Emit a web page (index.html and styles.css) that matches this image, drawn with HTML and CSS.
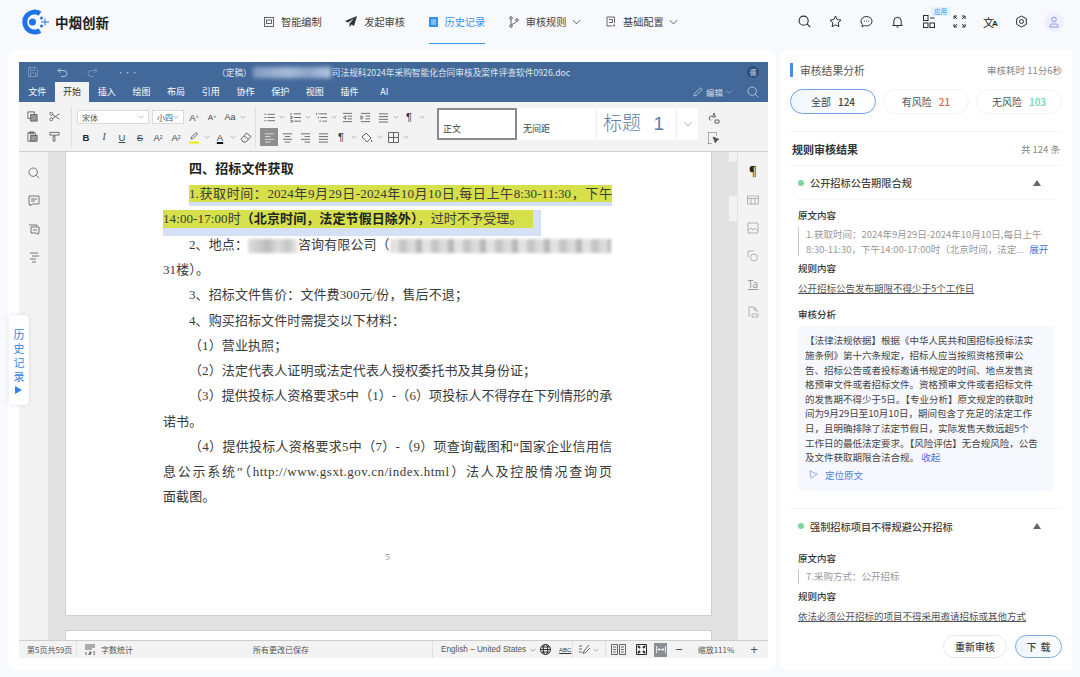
FILE: index.html
```html
<!DOCTYPE html>
<html lang="zh-CN">
<head>
  <meta charset="UTF-8" />
  <meta name="viewport" content="width=device-width, initial-scale=1.0">
  <title>中烟创新</title>
  <link rel="stylesheet" href="styles.css">
</head>
<body>

<!-- Shared icons -->
<svg class="icon-defs" xmlns="http://www.w3.org/2000/svg">
  <symbol id="i-list" viewBox="0 0 12 12"><path d="M4 2.5h8M4 6h8M4 9.5h8M0.5 2.5h2M0.5 6h2M0.5 9.5h2"/></symbol>
  <symbol id="i-list2" viewBox="0 0 12 12"><path d="M4 2h8M4 6h8M4 10h8M1 1v2.5M.5 5h2l-2 2h2M.5 9h2v2h-2"/></symbol>
  <symbol id="i-list3" viewBox="0 0 12 12"><path d="M3 2h9M5 6h7M7 10h5M.5 1v2M2.5 5v2M4.5 9v2"/></symbol>
  <symbol id="i-in" viewBox="0 0 12 12"><path d="M1 1.5h10M6 4.5h5M6 7.5h5M1 10.5h10M1 4l2.5 2L1 8z"/></symbol>
  <symbol id="i-out" viewBox="0 0 12 12"><path d="M1 1.5h10M6 4.5h5M6 7.5h5M1 10.5h10M4 4L1.5 6 4 8z"/></symbol>
  <symbol id="i-left" viewBox="0 0 12 12"><path d="M1 2h10M1 5h6M1 8h10M1 11h6"/></symbol>
  <symbol id="i-center" viewBox="0 0 12 12"><path d="M1 2h10M3 5h6M1 8h10M3 11h6"/></symbol>
  <symbol id="i-right" viewBox="0 0 12 12"><path d="M1 2h10M5 5h6M1 8h10M5 11h6"/></symbol>
  <symbol id="i-just" viewBox="0 0 12 12"><path d="M1 2h10M1 5h10M1 8h10M1 11h10"/></symbol>
  <symbol id="i-copy" viewBox="0 0 12 12"><rect x="1" y="1" width="7" height="7"/><rect x="4" y="4" width="7" height="7" fill="#9a9a9a"/></symbol>
  <symbol id="i-paste" viewBox="0 0 12 12"><rect x="1" y="2" width="8" height="9"/><rect x="3" y="1" width="4" height="2"/><rect x="4" y="5" width="7" height="6" fill="#9a9a9a"/></symbol>
  <symbol id="i-cut" viewBox="0 0 12 12"><circle cx="2.5" cy="3" r="1.6"/><circle cx="2.5" cy="9" r="1.6"/><path d="M4 4l7.5 5M4 8l7.5-5"/></symbol>
  <symbol id="i-brush" viewBox="0 0 12 12"><path d="M1 1.5h10v3H1zM6 4.5v1.500H4.500v5h2V6"/></symbol>
  <symbol id="i-search" viewBox="0 0 12 12"><circle cx="5.200" cy="5.200" r="4.200"/><path d="M8.300 8.300L11.300 11.300"/></symbol>
  <symbol id="i-chev" viewBox="0 0 12 8"><path d="M1 1.500l5 5 5-5"/></symbol>
</svg>

<!-- Top navigation -->
<header class="topbar">
  <div class="logo">
    <svg width="30" height="26" viewBox="0 0 30 26">
      <path d="M20 4.500A10 10 0 1 0 20 21.500" fill="none" stroke="#1f72e8" stroke-width="5"/>
      <circle cx="12.500" cy="13" r="3.500" fill="#1f72e8"/>
      <path d="M21 13h8M25 9.500v7" stroke="#1f72e8" stroke-width="1" fill="none"/>
      <circle cx="21.500" cy="9" r="1.500" fill="#1f72e8"/><circle cx="21.500" cy="17" r="1.500" fill="#1f72e8"/>
    </svg>
    <span class="logo-text">中烟创新</span>
  </div>
  <nav class="nav">
    <a class="nav-item">
      <svg width="10" height="10" viewBox="0 0 10 10" class="ln"><rect x=".5" y=".5" width="9" height="9"/><rect x="2.500" y="3" width="5" height="3.500"/></svg>智能编制
    </a>
    <a class="nav-item">
      <svg width="12" height="11" viewBox="0 0 12 11"><path d="M12 0L0 5l3 1.500L9 2.500 4.500 7.500V11l2-2.500 2.500 1.500z" fill="#333"/></svg>发起审核
    </a>
    <a class="nav-item active">
      <svg width="9" height="10" viewBox="0 0 9 10"><rect width="9" height="10" rx="1" fill="#2f8fef"/><path d="M2 3h5M2 5h5M2 7h5" stroke="#fff" stroke-width=".8"/></svg>历史记录
    </a>
    <a class="nav-item">
      <svg width="10" height="12" viewBox="0 0 10 12" class="ln"><circle cx="2" cy="2" r="1.300"/><circle cx="2" cy="10" r="1.300"/><circle cx="8" cy="4" r="1.300"/><path d="M2 3.300v5.400M7.500 5.300C7 7.500 4 7 2.800 8.800"/></svg>审核规则<svg class="chev" width="9" height="6"><use href="#i-chev"/></svg>
    </a>
    <a class="nav-item">
      <svg width="10" height="11" viewBox="0 0 10 11" class="ln"><path d="M8.500 7V1H1v9h5M3 3.500h3.500v3H3M8 8.500v2M7 9.500h2"/></svg>基础配置<svg class="chev" width="9" height="6"><use href="#i-chev"/></svg>
    </a>
  </nav>
  <div class="tools">
    <span class="tool-btn"><svg width="13" height="13" class="ln-dark"><use href="#i-search"/></svg></span>
    <span class="tool-btn"><svg width="13" height="13" viewBox="0 0 13 13" class="ln-dark"><path d="M6.500 1l1.700 3.600 3.800.5-2.800 2.700.7 3.900-3.400-1.900-3.400 1.900.7-3.900L1 5.100l3.800-.5z"/></svg></span>
    <span class="tool-btn"><svg width="13" height="13" viewBox="0 0 13 13" class="ln-dark"><path d="M6.500 1.500c3 0 5.500 2 5.500 4.700s-2.500 4.700-5.500 4.700c-.8 0-1.500-.1-2.200-.4L2 11.800l.4-2.400C1.500 8.500 1 7.400 1 6.200 1 3.500 3.500 1.500 6.500 1.500z"/><path d="M4 6.200h.8M6.100 6.200h.8M8.200 6.200H9"/></svg></span>
    <span class="tool-btn"><svg width="13" height="13" viewBox="0 0 13 13" class="ln-dark"><path d="M1.500 10.500h10M2.800 10.500V6a3.700 3.700 0 0 1 7.400 0v4.500M5.500 12h2"/></svg></span>
    <span class="tool-btn apps">
      <svg width="12" height="13" viewBox="0 0 12 13" class="ln-dark"><rect x=".5" y=".5" width="4.500" height="5"/><rect x=".5" y="8" width="4.500" height="4.500"/><rect x="7" y="8" width="4.500" height="4.500"/><path d="M7 3h4.500"/></svg>
      <span class="badge">应用</span>
    </span>
    <span class="tool-btn"><svg width="13" height="13" viewBox="0 0 13 13" class="ln-dark"><path d="M1 4V1h3M1 1l3 3M12 4V1H9M12 1L9 4M1 9v3h3M1 12l3-3M12 9v3H9M12 12L9 9"/></svg></span>
    <span class="tool-btn trans">文<b>A</b></span>
    <span class="tool-btn"><svg width="13" height="13" viewBox="0 0 13 13" class="ln-dark"><path d="M6.500 1l4.800 2.700v5.600L6.500 12 1.700 9.300V3.700z"/><circle cx="6.500" cy="6.500" r="2"/></svg></span>
    <span class="avatar"><svg width="12" height="12" viewBox="0 0 12 12" class="ln-blue"><circle cx="6" cy="3.500" r="2.300"/><path d="M2 11V9.500c0-.8.800-1.500 1.500-1.500h5c.8 0 1.500.7 1.500 1.500V11z"/></svg></span>
  </div>
</header>

<main class="main">
  <!-- Document editor -->
  <section class="doc-card">
    <div class="history-tab">历<br>史<br>记<br>录<span class="history-arrow"></span></div>
    <div class="word">
      <div class="title-bar">
        <div class="quick">
          <svg width="10" height="10" viewBox="0 0 10 10" class="ln-dim"><path d="M.5.500h7l2 2v7h-9zM2.500 1v2.500h4V1M2.500 9V6h5v3"/></svg>
          <svg width="11" height="10" viewBox="0 0 11 10" class="ln-pale"><path d="M3.500 1L1 3.500 3.500 6M1 3.500h6a3 3 0 0 1 0 6H4"/></svg>
          <svg width="11" height="10" viewBox="0 0 11 10" class="ln-dim"><path d="M7.500 1L10 3.500 7.500 6M10 3.500H4a3 3 0 0 0 0 6h3"/></svg>
          <span class="dots">···</span>
        </div>
        <div class="doc-name">（定稿）<span class="blur-name"></span>司法规科2024年采购智能化合同审核及案件评查软件0926.doc</div>
        <span class="doc-user">德</span>
      </div>
      <div class="tab-bar">
        <span class="tab">文件</span><span class="tab current">开始</span><span class="tab">插入</span><span class="tab">绘图</span><span class="tab">布局</span><span class="tab">引用</span><span class="tab">协作</span><span class="tab">保护</span><span class="tab">视图</span><span class="tab">插件</span><span class="tab">AI</span>
        <span class="edit-mode">
          <svg width="10" height="10" viewBox="0 0 10 10" class="ln-pale"><path d="M1 9l.5-2.500L7.500.8l1.700 1.700-6 5.900z"/></svg>编辑
          <svg class="chev" width="6" height="4"><use href="#i-chev"/></svg>
        </span>
        <svg class="tab-search ln-pale" width="12" height="12"><use href="#i-search"/></svg>
      </div>

      <div class="ribbon">
        <div class="rb-clip">
          <span class="c"><svg class="ic"><use href="#i-copy"/></svg></span><span class="c"><svg class="ic"><use href="#i-cut"/></svg></span>
          <span class="c"><svg class="ic"><use href="#i-paste"/></svg></span><span class="c"><svg class="ic"><use href="#i-brush"/></svg></span>
        </div>
        <div class="rb-font">
          <div class="rb-row">
            <span class="sel font-sel">宋体<svg class="chev" width="6" height="4"><use href="#i-chev"/></svg></span>
            <span class="sel size-sel">小四<svg class="chev" width="6" height="4"><use href="#i-chev"/></svg></span>
            <span class="c glyph">A<sup>˄</sup></span><span class="c glyph small">A<sup>˅</sup></span><span class="c glyph wide">Aa</span><span class="m"><svg class="chev" width="6" height="4"><use href="#i-chev"/></svg></span>
          </div>
          <div class="rb-row">
            <span class="c glyph bold">B</span><span class="c glyph ital">I</span><span class="c glyph under">U</span><span class="c glyph strike">S</span><span class="c glyph">A<sup>2</sup></span><span class="c glyph">A<sub>2</sub></span>
            <span class="c"><svg width="12" height="13" viewBox="0 0 12 13" class="ln"><path d="M3 8l.5-2L8 1.500 9.500 3 5 7.500z"/><path d="M1 11.500h10" stroke="#f3e600" stroke-width="2"/></svg></span><span class="m"><svg class="chev" width="6" height="4"><use href="#i-chev"/></svg></span>
            <span class="c glyph color-a">A</span><span class="m"><svg class="chev" width="6" height="4"><use href="#i-chev"/></svg></span>
            <span class="c"><svg width="12" height="11" viewBox="0 0 12 11" class="ln"><path d="M1 7l5.500-6L11 4.500 6 10H3zM4 4l4.500 3.500"/></svg></span>
          </div>
        </div>
        <div class="rb-para">
          <div class="rb-row">
            <span class="c"><svg class="ic"><use href="#i-list"/></svg></span><span class="m"><svg class="chev" width="6" height="4"><use href="#i-chev"/></svg></span>
            <span class="c"><svg class="ic"><use href="#i-list2"/></svg></span><span class="m"><svg class="chev" width="6" height="4"><use href="#i-chev"/></svg></span>
            <span class="c"><svg class="ic"><use href="#i-list3"/></svg></span><span class="m"><svg class="chev" width="6" height="4"><use href="#i-chev"/></svg></span>
            <span class="c"><svg class="ic"><use href="#i-out"/></svg></span><span class="c"><svg class="ic"><use href="#i-in"/></svg></span>
            <span class="c"><svg class="ic"><use href="#i-just"/></svg></span><span class="m"><svg class="chev" width="6" height="4"><use href="#i-chev"/></svg></span>
            <span class="c glyph pil">¶</span><span class="m"><svg class="chev" width="6" height="4"><use href="#i-chev"/></svg></span>
          </div>
          <div class="rb-row">
            <span class="c picked"><svg class="ic"><use href="#i-left"/></svg></span>
            <span class="c"><svg class="ic"><use href="#i-center"/></svg></span>
            <span class="c"><svg class="ic"><use href="#i-right"/></svg></span>
            <span class="c"><svg class="ic"><use href="#i-just"/></svg></span>
            <span class="c glyph pil">¶</span><span class="m"><svg class="chev" width="6" height="4"><use href="#i-chev"/></svg></span>
            <span class="c"><svg width="12" height="11" viewBox="0 0 12 11" class="ln"><path d="M5 1l5 5-4 4-5-5zM10.500 8v2"/></svg></span><span class="m"><svg class="chev" width="6" height="4"><use href="#i-chev"/></svg></span>
            <span class="c"><svg width="11" height="11" viewBox="0 0 11 11" class="ln"><path d="M.5.500h10v10H.5zM5.500.500v10M.5 5.500h10"/></svg></span><span class="m"><svg class="chev" width="6" height="4"><use href="#i-chev"/></svg></span>
          </div>
        </div>
        <div class="styles">
          <span class="style-box on">正文</span>
          <span class="style-box">无间距</span>
          <span class="style-box big">标题&nbsp;&nbsp;<span class="h-num">1</span></span>
          <span class="style-more"><svg class="chev" width="10" height="6"><use href="#i-chev"/></svg></span>
        </div>
        <div class="rb-end">
          <svg width="12" height="12" viewBox="0 0 12 12" class="ln"><path d="M1 7a3 3 0 0 1 3-3M1 7l2 1.500M6 1l1.500 4h-3zM7 8h4v3H7z"/></svg>
          <svg width="12" height="12" viewBox="0 0 12 12" class="ln"><path d="M.5.500h8M.5.500v11M.5 11.500h4M8.500.500V4" stroke-dasharray="1 1"/><path d="M5 5l6 2.500-2.500 1L7.500 11z" fill="#555"/></svg>
        </div>
      </div>

      <div class="doc-area">
        <aside class="rail">
          <svg class="ic"><use href="#i-search"/></svg>
          <svg class="ic" viewBox="0 0 12 12"><path d="M1 1h10v8H4l-2 2V9H1zM3 4h6M3 6h4"/></svg>
          <svg class="ic" viewBox="0 0 12 12"><path d="M1 2h8v1M3 4h8v6h-1v1.500L8.500 10H3zM5 7h4"/></svg>
          <svg class="ic" viewBox="0 0 12 12"><path d="M2 2h8M4 5h7M2 8h6M4 11h4"/></svg>
        </aside>
        <div class="pages">
          <article class="page">
            <p class="line indent strong">四、招标文件获取</p>
            <p class="line indent fill"><span class="sel-blue"><span class="mark">1.获取时间：2024年9月29日-2024年10月10日,每日上午8:30-11:30，下午</span></span></p>
            <p class="line"><span class="sel-blue last"><span class="mark">14:00-17:00时<b>（北京时间，法定节假日除外）</b>，过时不予受理。</span></span></p>
            <p class="line indent">2、地点：<span class="blur short"></span>咨询有限公司（<span class="blur long"></span></p>
            <p class="line">31楼）。</p>
            <p class="line indent">3、招标文件售价：文件费300元/份，售后不退；</p>
            <p class="line indent">4、购买招标文件时需提交以下材料：</p>
            <p class="line indent">（1）营业执照；</p>
            <p class="line indent">（2）法定代表人证明或法定代表人授权委托书及其身份证；</p>
            <p class="line indent tight-line fill">（3）提供投标人资格要求5中（1）-（6）项投标人不得存在下列情形的承</p>
            <p class="line">诺书。</p>
            <p class="line indent tight-line fill">（4）提供投标人资格要求5中（7）-（9）项查询截图和“国家企业信用信</p>
            <p class="line fill">息公示系统”（<span class="url">http://www.gsxt.gov.cn/index.html</span>）法人及控股情况查询页</p>
            <p class="line">面截图。</p>
            <div class="page-no">5</div>
          </article>
          <div class="page next"></div>
        </div>
        <div class="scroll">
          <span class="scroll-up"></span>
          <span class="scroll-thumb"></span>
        </div>
        <aside class="rail right">
          <span class="pil-dark">¶</span>
          <svg class="ic" viewBox="0 0 12 12"><path d="M.5 2h11v8H.5zM.5 4.500h11M4 4.500V10M8 4.500V10"/></svg>
          <svg class="ic" viewBox="0 0 12 12"><path d="M1 1h10v10H1zM1 9l3-3 2 2 2-2 3 3"/></svg>
          <svg class="ic" viewBox="0 0 12 12"><path d="M1 7V1h6"/><circle cx="7" cy="7.500" r="3.500"/></svg>
          <span class="ta">Ta</span>
          <svg class="ic" viewBox="0 0 12 12"><path d="M2 11V1h5l3 3v2M7 1v3h3M5 8h6v3H5z"/></svg>
        </aside>
      </div>

      <footer class="status">
        <span class="st-pages">第5页共59页</span>
        <span class="st-count">
          <svg width="10" height="11" viewBox="0 0 10 11" class="ln"><path d="M0 1h10M0 3h10M0 5h7M1 8v3M4 8h2v1.500H4V11h2M8 8h2v3H8"/></svg>字数统计
        </span>
        <span class="st-saved">所有更改已保存</span>
        <span class="st-lang">English – United States<svg class="chev" width="6" height="4"><use href="#i-chev"/></svg>
          <svg width="11" height="11" viewBox="0 0 11 11" class="ln-dark"><circle cx="5.500" cy="5.500" r="5"/><ellipse cx="5.500" cy="5.500" rx="2.200" ry="5"/><path d="M.5 5.500h10M1.300 3h8.400M1.300 8h8.400"/></svg>
          <span class="abc">ABC</span>
        </span>
        <span class="st-track">
          <svg width="11" height="11" viewBox="0 0 11 11" class="ln"><path d="M0 2h3M0 5h3M0 8h3M10 1L5 7l-1 2.500L6.500 8.500l5-5" stroke-width=".9"/></svg>
          <svg class="chev" width="6" height="4"><use href="#i-chev"/></svg>
        </span>
        <span class="st-view">
          <svg width="15" height="11" viewBox="0 0 15 11" class="ln"><path d="M.5.500h6v10h-6zM8.500.500h6v10h-6zM2 3h3M2 5.500h3M2 8h3M10 3h3M10 5.500h3M10 8h3"/></svg>
          <svg width="11" height="11" viewBox="0 0 11 11" class="ln-dark"><path d="M.5.500h10v10H.5z"/><path d="M2 2l2 2M9 2L7 4M2 9l2-2M9 9L7 7" stroke-width="2"/></svg>
          <span class="fit-on"><svg width="10" height="7" viewBox="0 0 10 7" class="ln-white"><path d="M.5 0v7M9.500 0v7M2 3.500h6M3.500 2L2 3.500 3.500 5M6.500 2L8 3.500 6.500 5"/></svg></span>
        </span>
        <span class="st-zoom"><span class="op">−</span><span class="pct">缩放111%</span><span class="op">+</span></span>
      </footer>
    </div>
  </section>

  <!-- Review results -->
  <aside class="panel">
    <div class="panel-body">
      <div class="res-head">
        <h2 class="res-title">审核结果分析</h2>
        <span class="muted">审核耗时 11分6秒</span>
      </div>
      <div class="filters">
        <button class="pill active">全部<b>124</b></button>
        <button class="pill">有风险<b class="red">21</b></button>
        <button class="pill">无风险<b class="green">103</b></button>
      </div>
      <div class="rule-head">
        <h3>规则审核结果</h3>
        <span class="muted">共 124 条</span>
      </div>

      <div class="rule">
        <div class="rule-top lined"><i class="dot"></i><span class="rule-name">公开招标公告期限合规</span><i class="tri"></i></div>
        <div class="label first">原文内容</div>
        <blockquote class="quote">1.获取时间：2024年9月29日-2024年10月10日,每日上午<br>8:30-11:30，下午14:00-17:00时（北京时间，法定... <a>展开</a></blockquote>
        <div class="label">规则内容</div>
        <div class="rule-link">公开招标公告发布期限不得少于5个工作日</div>
        <div class="label analysis">审核分析</div>
        <div class="analysis-box">
          <p>【法律法规依据】根据《中华人民共和国招标投标法实<br>施条例》第十六条规定，招标人应当按照资格预审公<br>告、招标公告或者投标邀请书规定的时间、地点发售资<br>格预审文件或者招标文件。资格预审文件或者招标文件<br>的发售期不得少于5日。【专业分析】原文规定的获取时<br>间为9月29日至10月10日，期间包含了充足的法定工作<br>日，且明确排除了法定节假日，实际发售天数远超5个<br>工作日的最低法定要求。【风险评估】无合规风险，公告<br>及文件获取期限合法合规。 <a>收起</a></p>
          <div class="locate">
            <svg width="9" height="9" viewBox="0 0 9 9"><path d="M.8.800L8.300 4.200 2 8.300z" fill="none" stroke="#7aa0e8" stroke-width=".8"/></svg>定位原文
          </div>
        </div>
      </div>

      <div class="rule second">
        <div class="rule-top"><i class="dot"></i><span class="rule-name">强制招标项目不得规避公开招标</span><i class="tri"></i></div>
        <div class="label first">原文内容</div>
        <blockquote class="quote tight">7.采购方式：公开招标</blockquote>
        <div class="label">规则内容</div>
        <div class="rule-link">依法必须公开招标的项目不得采用邀请招标或其他方式</div>
      </div>
    </div>
    <div class="panel-foot">
      <button class="foot-btn">重新审核</button>
      <button class="foot-btn primary">下 载</button>
    </div>
  </aside>
</main>

</body>
</html>
```

FILE: styles.css
```css
* { margin: 0; padding: 0; box-sizing: border-box; }
html, body { height: 100%; }
body {
  font-family: "Noto Sans CJK SC", "Noto Sans", sans-serif;
  background: #f8f9fc;
  color: #333;
  overflow: hidden;
  font-size: 10px;
}
svg { flex: none; }
.icon-defs { display: none; }
.ln, .ic { fill: none; stroke: #555; stroke-width: .9; }
.ln-dark { fill: none; stroke: #2b2b2b; stroke-width: 1; }
.ln-blue { fill: none; stroke: #7f8ff0; stroke-width: .9; }
.ln-pale { fill: none; stroke: #b9c9de; stroke-width: .9; }
.ln-dim { fill: none; stroke: #7f97b8; stroke-width: .9; }
.ln-white { fill: none; stroke: #fff; stroke-width: .8; }
.chev { fill: none; stroke: currentColor; stroke-width: 1; }

/* top bar */
.topbar { height: 50px; display: flex; align-items: flex-start; padding: 0 16px 0 20px; }
.logo { display: flex; align-items: center; gap: 5px; height: 43px; width: 89px; }
.logo-text { font-size: 13.5px; font-weight: 700; color: #1c1c1c; white-space: nowrap; }
.nav { display: flex; margin-left: 155px; gap: 23.500px; }
.nav-item {
  height: 44px; display: flex; align-items: center; gap: 7px;
  font-size: 10.200px; color: #444; white-space: nowrap;
  border-bottom: 1.5px solid transparent;
}
.nav-item:last-child { margin-left: 2px; }
.nav-item .chev { width: 9px; height: 6px; margin-left: -2px; color: #333; }
.nav-item.active { color: #3a93ec; border-bottom-color: #3a93ec; }
.tools { display: flex; align-items: center; margin-left: auto; height: 43px; }
.tool-btn { width: 31px; height: 31px; display: flex; align-items: center; justify-content: center; position: relative; }
.badge {
  position: absolute; top: 1px; left: 18px; width: 19px; height: 9px;
  background: #e6f1fd; color: #3a93ec; font-size: 6.5px; line-height: 9px;
  text-align: center; border-radius: 1px;
}
.trans { font-size: 11px; color: #222; }
.trans b { font-size: 8px; margin: 4px 0 0 -2px; font-family: "Liberation Sans", sans-serif; }
.avatar {
  width: 20px; height: 20px; border-radius: 50%; background: #eef0fe;
  display: flex; align-items: center; justify-content: center; margin-left: 7px;
}

/* layout */
.main { display: flex; gap: 4px; padding: 0 8px; height: 620px; }
.doc-card {
  width: 768px; background: #fff; position: relative;
  padding: 12px 8px 12px 11px; border-radius: 6px;
}
.panel {
  width: 292px; background: #fff; border-radius: 4px;
  display: flex; flex-direction: column;
}

/* history tab over the editor */
.history-tab {
  position: absolute; left: 1px; top: 265px; width: 20px; height: 90px;
  background: #fff; border-radius: 4px; box-shadow: 0 0 4px rgba(0,0,0,.12);
  z-index: 2; text-align: center; color: #2f86e6; font-size: 11px; line-height: 14px;
  padding-top: 12px;
}
.history-arrow {
  display: block; width: 0; height: 0; margin: 3px auto 0 6px;
  border-left: 7px solid #2f86e6; border-top: 4.500px solid transparent; border-bottom: 4.500px solid transparent;
}

/* word frame */
.word { height: 596px; display: flex; flex-direction: column; background: #f3f3f3; }
.title-bar {
  height: 20px; background: #43699a; display: flex; align-items: center;
  color: #dfe7f2; font-size: 8.5px; position: relative;
}
.quick { display: flex; align-items: center; width: 196px; padding-left: 9px; gap: 19px; }
.dots { color: #b9c9de; font-size: 7px; letter-spacing: 0; }
.doc-name { white-space: nowrap; font-size: 8.700px; display: flex; align-items: center; margin-left: 2px; }
.blur-name { display: inline-block; width: 78px; height: 11px; margin: 0 1px; background: linear-gradient(90deg, #7f9cc4, #a9bcd8 45%, #8ba5ca 70%, #b7c8df); filter: blur(2px); }
.doc-user {
  margin-left: auto; margin-right: 9px; width: 12px; height: 12px; border-radius: 50%;
  background: #2f4d78; font-size: 6.500px; line-height: 12px; text-align: center;
}
.tab-bar { height: 20px; background: #43699a; display: flex; align-items: stretch; padding-left: 1px; }
.tab { width: 34.700px; text-align: center; color: #fff; font-size: 9px; line-height: 20px; }
.tab.current { background: #f3f3f3; color: #333; }
.edit-mode { margin-left: auto; display: flex; align-items: center; gap: 3px; color: #cfdbea; font-size: 8.500px; margin-right: 15px; }
.tab-search { align-self: center; margin-right: 9px; }

/* ribbon */
.ribbon {
  height: 50px; display: flex; align-items: flex-start; padding-top: 5px;
  border-bottom: 1px solid #cfcfcf; color: #444;
}
.rb-clip {
  width: 53px; height: 40px; display: grid; grid-template-columns: 22px 22px;
  grid-auto-rows: 20px; padding-left: 4px; border-right: 1px solid #dedede;
}
.rb-font { width: 184px; padding-left: 5px; border-right: 1px solid #dedede; height: 40px; }
.rb-para { width: 173px; padding-left: 4px; }
.rb-row { display: flex; align-items: center; height: 20px; }
.c { width: 18px; height: 18px; display: flex; align-items: center; justify-content: center; font-size: 9px; flex: none; }
.m { width: 8px; display: flex; justify-content: center; color: #777; flex: none; }
.ic { width: 11px; height: 11px; }
.sel {
  height: 14px; background: #fff; border: 1px solid #dadada; font-size: 8px; color: #555;
  display: flex; align-items: center; justify-content: space-between; padding: 0 4px;
  margin-right: 3px; font-family: "Noto Sans CJK SC", sans-serif; flex: none;
}
.sel .chev { color: #777; }
.font-sel { width: 72px; }
.size-sel { width: 32px; margin-right: 1px; }
.glyph { font-family: "Liberation Sans", sans-serif; color: #444; font-size: 9.500px; }
.glyph sup, .glyph sub { font-size: 5px; line-height: 0; }
.glyph.small { font-size: 8px; }
.glyph.wide { font-size: 9px; }
.bold { font-weight: 700; color: #222; }
.ital { font-style: italic; font-family: "Liberation Serif", serif; }
.under { text-decoration: underline; }
.strike { text-decoration: line-through; }
.color-a { text-decoration: underline 2px #111; text-underline-offset: 1px; }
.pil { font-size: 11px; color: #333; }
.picked { background: #8e8e8e; }
.picked .ic { stroke: #e8e8e8; }

.styles {
  display: flex; height: 32px; margin-left: 8px; margin-top: 1px; background: #fff;
  font-family: "Liberation Serif", "Noto Sans CJK SC", serif;
}
.style-box {
  width: 80px; padding: 14px 0 0 6px; font-size: 9px; color: #444; border-right: 1px solid #ececec;
}
.style-box.on { border: 2px solid #8b8b8b; padding-left: 4px; padding-top: 12px; }
.style-box.big { font-size: 19px; color: #5c80a8; padding: 0 0 0 6px; line-height: 31px; font-weight: 300; white-space: nowrap; }
.h-num { font-family: "Liberation Sans", sans-serif; margin-left: 3px; }
.style-more { width: 21px; display: flex; align-items: center; justify-content: center; color: #888; }
.rb-end { display: flex; flex-direction: column; gap: 8px; margin: 5px 0 0 10px; }

/* document */
.doc-area { height: 488px; display: flex; background: #e2e2e2; overflow: hidden; }
.rail {
  width: 29px; background: #f3f3f3; display: flex; flex-direction: column;
  align-items: center; gap: 16px; padding-top: 15px; flex: none;
}
.rail .ic { stroke: #666; width: 12px; height: 12px; }
.rail.right { width: 30px; gap: 16px; padding-top: 14px; }
.rail.right .ic { stroke: #aaa; }
.pil-dark { font-size: 12px; line-height: 12px; height: 12px; color: #222; font-family: "Noto Sans", sans-serif; }
.ta { font-size: 10px; line-height: 12px; height: 12px; color: #999; text-decoration: underline; font-family: "Noto Sans", sans-serif; }
.pages { width: 664px; padding-left: 17px; flex: none; background: #e2e2e2; }
.page {
  width: 647px; height: 464px; background: #fff; padding: 4px 99px 0 97px;
  font-family: "Liberation Serif", "Noto Sans CJK SC", serif;
  font-size: 13px; color: #3a3a3a; border: 1px solid #cfcfcf; border-top: 0;
}
.page.next { height: 40px; margin-top: 14px; border-top: 1px solid #cfcfcf; }
.line { height: 25.250px; line-height: 25.250px; white-space: nowrap; letter-spacing: .1px; }
.indent { padding-left: 26px; }
.strong { font-weight: 700; color: #222; }
.fill { text-align: justify; text-align-last: justify; }
.tight-line { letter-spacing: -.2px; }
.url { letter-spacing: .5px; }
.sel-blue {
  display: inline-block; width: 100%; height: 21px; line-height: 17px;
  background: #d5dff5; vertical-align: top; margin-top: 4px;
}
.sel-blue.last { width: 378px; height: 26px; margin-top: 3px; line-height: 18px; }
.mark { background: #d6e04a; display: inline-block; height: 17px; line-height: 17px; white-space: nowrap; }
.fill .sel-blue { text-align-last: left; }
.fill .mark { width: 100%; text-align: justify; text-align-last: justify; }
.last .mark { height: 18px; width: 370px; line-height: 18px; }
.mark b { color: #222; }
.blur { display: inline-block; height: 14px; vertical-align: middle; filter: blur(1.500px); }
.blur.short { width: 50px; background: linear-gradient(90deg, #ddd, #bbb 40%, #ddd 60%, #c4c4c4 80%, #eee); }
.blur.long {
  width: 221px;
  background: repeating-linear-gradient(90deg, #e2e2e2 0 9px, #c6c6c6 9px 17px, #dadada 17px 26px, #b8b8b8 26px 32px);
}
.page-no { text-align: center; color: #888; font-size: 9px; margin-top: 42px; }
.scroll { width: 26px; padding: 0 1px 0 17px; flex: none; display: flex; flex-direction: column; background: #e2e2e2; }
.scroll-up { height: 10px; background: #f2f2f2; display: block; }
.scroll-thumb { height: 25px; margin-top: 34px; background: #f2f2f2; border-radius: 1px; display: block; }

/* status */
.status {
  height: 18px; border-top: 1px solid #cdcdcd; display: flex; align-items: center;
  font-size: 8px; color: #555; background: #f3f3f3;
}
.status > span { flex: none; }
.st-pages { width: 58px; padding-left: 8px; line-height: 17px; border-right: 1px solid #e3e3e3; white-space: nowrap; }
.st-count { display: flex; align-items: center; gap: 6px; width: 176px; padding-left: 8px; white-space: nowrap; }
.st-saved { width: 179px; white-space: nowrap; }
.st-lang {
  display: flex; align-items: center; gap: 4px; width: 140px; height: 17px; padding-left: 8px;
  border-left: 1px solid #e0e0e0; white-space: nowrap; font-family: "Liberation Sans", sans-serif; font-size: 8.200px;
}
.abc { font-size: 6px; margin-left: 4px; color: #333; text-decoration: underline; }
.st-track { display: flex; align-items: center; gap: 3px; width: 33px; height: 17px; padding-left: 6px; border-left: 1px solid #e0e0e0; }
.st-track .chev { color: #777; }
.st-view { display: flex; align-items: center; gap: 10px; width: 67px; height: 17px; padding-left: 5px; border-left: 1px solid #e0e0e0; }
.fit-on { width: 13px; height: 14px; margin-left: -3px; background: #8a8f96; display: flex; align-items: center; justify-content: center; }
.st-zoom { display: flex; align-items: center; width: 96px; margin-left: -3px; }
.op { font-size: 13px; color: #555; width: 20px; text-align: center; font-family: "Liberation Sans", sans-serif; }
.pct { width: 50px; text-align: center; font-size: 8px; margin: 0 3px 0 2px; white-space: nowrap; }

/* right panel */
.panel-body { flex: 1; padding: 13px 10px 0; overflow: hidden; min-height: 0; }
.res-head { display: flex; justify-content: space-between; align-items: center; height: 14px; }
.res-title { font-size: 10.800px; font-weight: 400; color: #555; padding-left: 7px; border-left: 3px solid #4a8ae8; line-height: 14px; }
.muted { font-size: 9.500px; color: #888; white-space: nowrap; }
.filters { display: flex; gap: 7px; margin-top: 12px; padding-bottom: 17px; border-bottom: 1px solid #f2f3f6; }
.pill {
  width: 86px; height: 25px; border-radius: 13px; border: 1px solid #f0f2f6; background: #fff;
  font: 400 10px "Noto Sans CJK SC", sans-serif; color: #555; display: flex; align-items: center; justify-content: center; gap: 7px;
}
.pill b { font-size: 10px; font-weight: 500; }
.pill.active { border-color: #6fa3e8; background: linear-gradient(90deg, #f1f7ff, #fff); color: #444; }
.red { color: #e2665c; }
.green { color: #6fd3b2; }
.rule-head { height: 34px; display: flex; align-items: center; justify-content: space-between; border-bottom: 1px solid #f2f3f6; padding: 0 2px; }
.rule-head h3 { font-size: 11px; font-weight: 700; color: #333; }
.rule { padding: 0 8px 17px; border-bottom: 1px solid #f2f3f6; }
.rule.second { border-bottom: 0; }
.rule-top { height: 34px; display: flex; align-items: center; margin-right: -1px; }
.rule-top.lined { border-bottom: 1px solid #f4f5f7; }
.dot { width: 6px; height: 6px; border-radius: 50%; background: #7bd89c; margin-left: 0; margin-right: 6px; }
.rule-name { font-size: 10.200px; font-weight: 500; color: #444; }
.tri {
  margin-left: auto; margin-right: 14px; width: 0; height: 0;
  border-left: 4px solid transparent; border-right: 4px solid transparent; border-bottom: 6px solid #666;
}
.label { font-size: 9.500px; font-weight: 500; color: #333; line-height: 14px; margin-top: 5px; }
.label.first { margin-top: 8px; }
.label.analysis { margin-top: 12px; }
.quote {
  margin-top: 5px; border-left: 1px solid #ccc; padding-left: 7px;
  font-size: 9.500px; line-height: 14.700px; color: #999; white-space: nowrap;
}
.quote.tight { margin-top: 4px; }
.quote a { margin-left: 3px; }
.quote a, .analysis-box a { color: #3f74e0; }
.rule-link { margin-top: 6px; font-size: 9.500px; line-height: 14px; color: #555; text-decoration: underline; white-space: nowrap; }
.analysis-box { margin-top: 5px; background: #f7f8fd; border-radius: 4px; padding: 7px 7px 9px; height: 165px; width: 256px; }
.analysis-box p { font-size: 9.500px; line-height: 14.600px; color: #444; white-space: nowrap; }
.locate { display: flex; align-items: center; gap: 7px; color: #4a7fe0; font-size: 9.500px; line-height: 14px; margin-top: 3px; padding-left: 4px; }
.panel-foot { display: flex; justify-content: flex-end; gap: 8px; padding: 11px 10px 12px; }
.foot-btn {
  height: 23px; width: 64px; border-radius: 12px; background: #fff; border: 1px solid #e6e6e6;
  font: 500 10px "Noto Sans CJK SC", sans-serif; color: #444;
}
.foot-btn.primary { width: 47px; border-color: #7aa8e6; background: linear-gradient(90deg, #eef5ff, #fff); word-spacing: 2px; }
```
